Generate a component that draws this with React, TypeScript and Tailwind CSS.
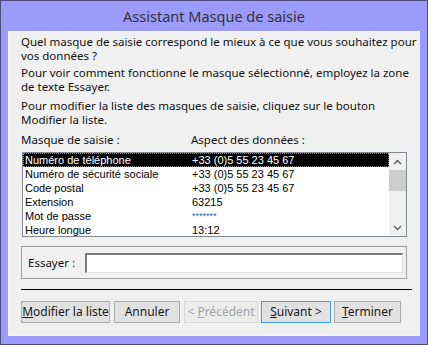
const rows = [
  ["Numéro de téléphone", "+33 (0)5 55 23 45 67"],
  ["Numéro de sécurité sociale", "+33 (0)5 55 23 45 67"],
  ["Code postal", "+33 (0)5 55 23 45 67"],
  ["Extension", "63215"],
  ["Mot de passe", "*******"],
  ["Heure longue", "13:12"],
];

function Btn({
  children,
  primary,
  disabled,
  w,
}: {
  children: React.ReactNode;
  primary?: boolean;
  disabled?: boolean;
  w: string;
}) {
  return (
    <button
      type="button"
      disabled={disabled}
      className={`${w} h-[22px] border bg-[#e1e1e1] text-[12px] leading-none ${
        primary
          ? "border-[#3c9bec] text-[#1a1a1a]"
          : disabled
          ? "border-[#d6d6d6] bg-[#ececec] text-[#a3a3a3]"
          : "border-[#adadad] text-[#1a1a1a]"
      }`}
    >
      {children}
    </button>
  );
}

export default function App() {
  return (
    <div
      className="flex h-[345px] w-[428px] flex-col border border-[#4d4d7a] bg-[#9b9bfb] text-[#111]"
      style={{ fontFamily: '"Noto Sans", "Liberation Sans", sans-serif' }}
    >
      <div className="flex h-[30px] items-center justify-center pt-[1px] text-[14.5px] text-[#333]">
        Assistant Masque de saisie
      </div>
      <div className="mx-[7px] mb-[8px] flex flex-1 flex-col border border-[#f6f6f6] bg-[#f0f0f0] px-[12px] pt-[3px] text-[11.5px] leading-[14px]">
        <p className="whitespace-nowrap">
          Quel masque de saisie correspond le mieux à ce que vous souhaitez pour
          <br />
          vos données ?
        </p>
        <p className="mt-[3px] whitespace-nowrap">
          Pour voir comment fonctionne le masque sélectionné, employez la zone
          <br />
          de texte Essayer.
        </p>
        <p className="mt-[5px] whitespace-nowrap">
          Pour modifier la liste des masques de saisie, cliquez sur le bouton
          <br />
          Modifier la liste.
        </p>
        <div className="mt-[6px] flex">
          <span className="w-[170px]">Masque de saisie :</span>
          <span>Aspect des données :</span>
        </div>
        <div
          className="ml-[1px] mt-[5px] flex h-[85px] w-[385px] border border-[#828790] bg-white text-[11px] leading-[14px]"
          style={{ fontFamily: '"Liberation Sans", Arial, sans-serif' }}
        >
          <div className="flex-1">
            {rows.map(([a, b], i) => (
              <div
                key={a}
                className={`flex h-[14px] items-center ${
                  i === 0
                    ? "border border-dotted border-[#888] bg-black text-white"
                    : "border border-transparent text-black"
                }`}
              >
                <span className="w-[168px] pl-[1px]">{a}</span>
                <span className={i === 4 ? "text-[9px] text-[#1e5fb4]" : ""}>{b}</span>
              </div>
            ))}
          </div>
          <div className="flex w-[17px] flex-col bg-[#f0f0f0]">
            <div className="flex h-[17px] items-center justify-center">
              <svg width="9" height="6" viewBox="0 0 9 6">
                <path d="M1 5 L4.5 1.5 L8 5" fill="none" stroke="#606060" strokeWidth="1.5" />
              </svg>
            </div>
            <div className="h-[21px] bg-[#cdcdcd]" />
            <div className="flex-1" />
            <div className="flex h-[17px] items-center justify-center">
              <svg width="9" height="6" viewBox="0 0 9 6">
                <path d="M1 1 L4.5 4.5 L8 1" fill="none" stroke="#606060" strokeWidth="1.5" />
              </svg>
            </div>
          </div>
        </div>
        <div className="mt-[9px] flex h-[33px] items-center border border-[#a0a0a0] pl-[6px] pr-[3px]">
          <span className="w-[57px]">Essayer :</span>
          <div className="h-[20px] flex-1 border-l-2 border-t-2 border-r border-b border-l-[#7a7a7a] border-t-[#7a7a7a] border-r-[#e3e3e3] border-b-[#e3e3e3] bg-white" />
        </div>
        <div className="mt-[10px] h-[1px] w-[391px] bg-black" />
        <div className="mt-[11px] flex">
          <Btn w="w-[89px]">
            <u>M</u>odifier la liste
          </Btn>
          <div className="ml-[4px]">
            <Btn w="w-[66px]">Annuler</Btn>
          </div>
          <div className="ml-[4px]">
            <Btn w="w-[74px]" disabled>
              &lt; <u>P</u>récédent
            </Btn>
          </div>
          <div className="ml-[3px]">
            <Btn w="w-[70px]" primary>
              <u>S</u>uivant &gt;
            </Btn>
          </div>
          <div className="ml-[3px]">
            <Btn w="w-[67px]">
              <u>T</u>erminer
            </Btn>
          </div>
        </div>
      </div>
    </div>
  );
}
